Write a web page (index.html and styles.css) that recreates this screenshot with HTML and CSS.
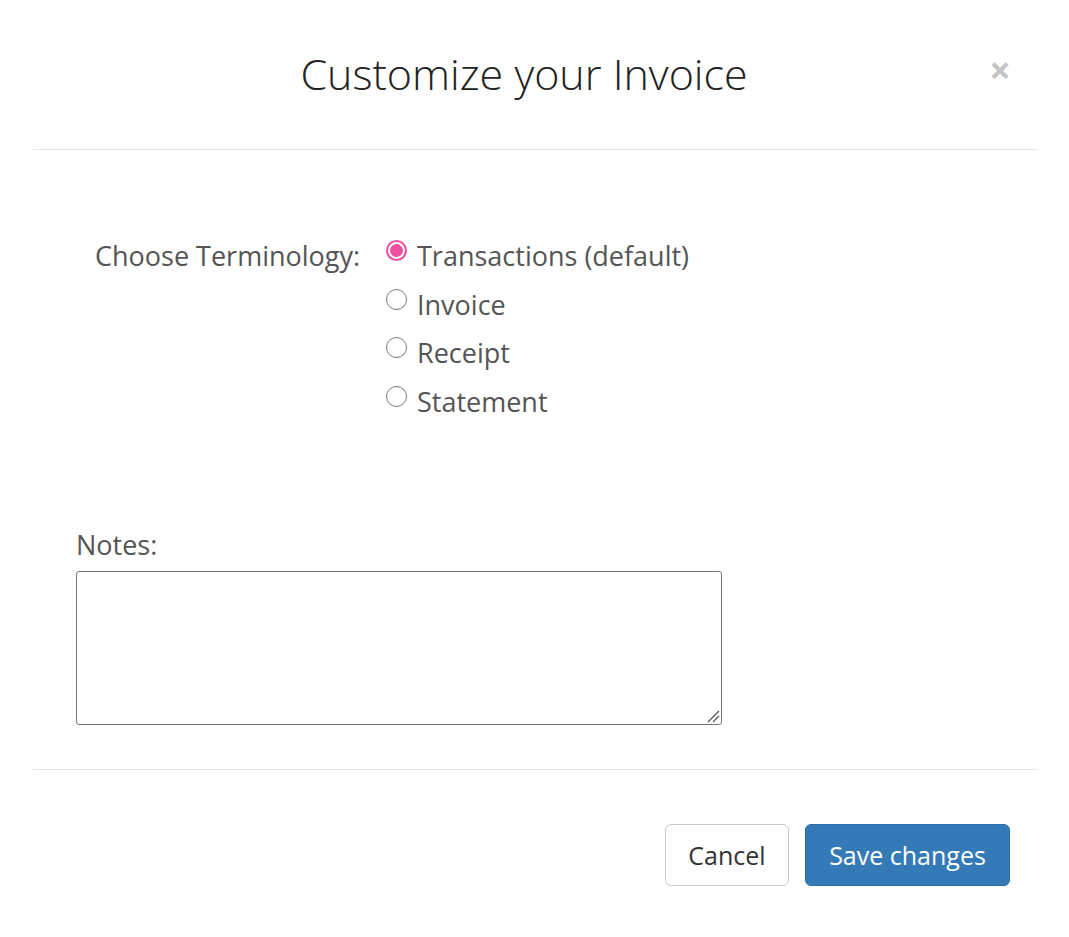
FILE: index.html
```html
<!DOCTYPE html>
<html>
<head>
<meta charset="utf-8">
<link rel="stylesheet" href="styles.css">
</head>
<body>
<div class="modal">
  <div class="modal-header">
    <button class="close" type="button" aria-label="Close">&times;</button>
    <h4 class="modal-title">Customize your Invoice</h4>
  </div>
  <div class="modal-body">
    <div class="term-row">
      <div class="term-label">Choose Terminology:</div>
      <div class="radios">
        <label class="radio"><span class="dot checked"></span>Transactions (default)</label>
        <label class="radio"><span class="dot"></span>Invoice</label>
        <label class="radio"><span class="dot"></span>Receipt</label>
        <label class="radio"><span class="dot"></span>Statement</label>
      </div>
    </div>
    <div class="notes">
      <div class="notes-label">Notes:</div>
      <div class="notes-box">
        <textarea class="notes-input"></textarea>
        <svg class="grip" width="14" height="14" viewBox="0 0 14 14"><path d="M13 2 L2 13 M13 7 L7 13" stroke="#555" stroke-width="1.3" fill="none"/></svg>
      </div>
    </div>
  </div>
  <div class="modal-footer">
    <button class="btn btn-default" type="button">Cancel</button>
    <button class="btn btn-primary" type="button">Save changes</button>
  </div>
</div>
</body>
</html>
```

FILE: styles.css
```css
html, body {
  margin: 0;
  padding: 0;
  background: #fff;
}
body {
  font-family: "Open Sans", "Liberation Sans", sans-serif;
  color: #555;
}
.modal {
  margin: 0 32px 0 33px;
}
.modal-header {
  height: 149px;
  border-bottom: 1px solid #e5e5e5;
  box-sizing: content-box;
  padding: 0;
  text-align: center;
}
.modal-title {
  margin: 0;
  padding-top: 48px;
  font-size: 43px;
  font-weight: 300;
  line-height: 52px;
  color: #222;
}
.close {
  float: right;
  margin: 47px 26px 0 -26px;
  padding: 0;
  border: 0;
  background: none;
  font-family: "Open Sans", "Liberation Sans", sans-serif;
  font-size: 38px;
  font-weight: 700;
  line-height: 44px;
  color: #c4c4c4;
  width: 22px;
}
.modal-body {
  padding: 82px 0 44px 43px;
}
.term-row {
  display: flex;
  align-items: flex-start;
}
.term-label {
  font-size: 27px;
  line-height: 48.5px;
  margin-left: 19px;
  width: 291px;
}
.radios {
  display: flex;
  flex-direction: column;
}
.radio {
  display: flex;
  align-items: center;
  font-size: 27px;
  line-height: 48.5px;
  height: 48.5px;
}
.dot {
  width: 21px;
  height: 21px;
  border: 1.5px solid #777;
  border-radius: 50%;
  margin-right: 10px;
  box-sizing: border-box;
  flex: none;
  margin-top: -11px;
}
.dot.checked {
  border: 2px solid #ee4f9f;
  position: relative;
}
.dot.checked::after {
  content: "";
  position: absolute;
  left: 2px;
  top: 2px;
  width: 13px;
  height: 13px;
  border-radius: 50%;
  background: #ee4f9f;
}
.notes {
  margin-top: 100px;
}
.notes-label {
  font-size: 27px;
  line-height: 38px;
  margin-left: 0;
  margin-bottom: 7px;
}
.notes-box {
  position: relative;
  width: 646px;
}
.notes-input {
  display: block;
  width: 646px;
  height: 154px;
  box-sizing: border-box;
  border: 1px solid #767676;
  border-radius: 3px;
  font-family: inherit;
  font-size: 25px;
  margin: 0;
  resize: none;
}
.grip {
  position: absolute;
  right: 2px;
  bottom: 2px;
}
.modal-footer {
  border-top: 1px solid #e5e5e5;
  padding: 54px 27px 40px 0;
  display: flex;
  justify-content: flex-end;
  gap: 16px;
}
.btn {
  font-family: "Open Sans", "Liberation Sans", sans-serif;
  font-size: 25px;
  height: 62px;
  padding: 0 20px;
  border-radius: 6px;
  border: 1px solid transparent;
  cursor: pointer;
}
.btn-default {
  background: #fff;
  border-color: #ccc;
  color: #333;
  width: 124px;
}
.btn-primary {
  background: #337ab7;
  border-color: #2e6da4;
  color: #fff;
  width: 205px;
}
```
